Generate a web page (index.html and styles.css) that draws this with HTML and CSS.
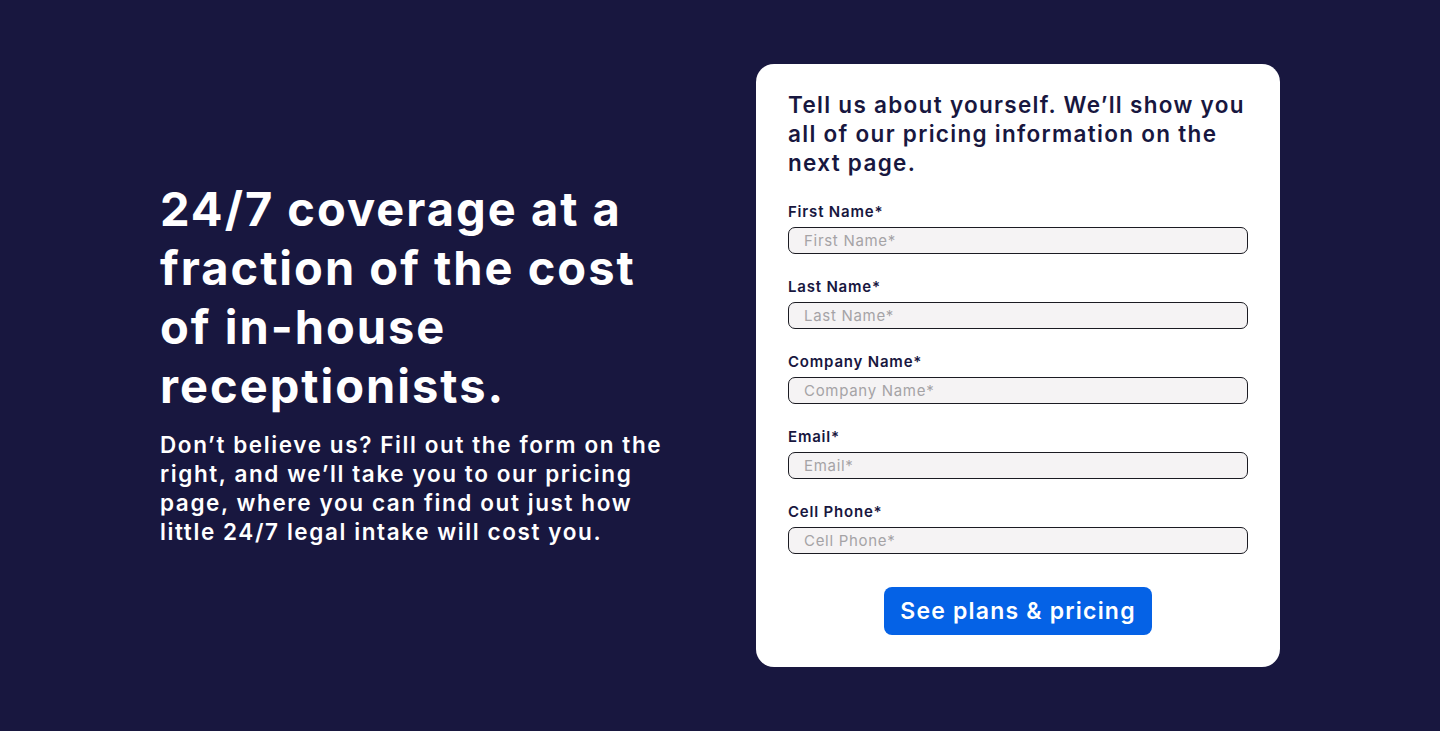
FILE: index.html
```html
<!DOCTYPE html>
<html lang="en">
<head>
<meta charset="utf-8">
<title>24/7 coverage</title>
<link rel="stylesheet" href="styles.css">
</head>
<body>
<section class="hero">
  <div class="hero-inner">
    <div class="intro">
      <h1 class="intro-title">24/7 coverage at a fraction of the cost of in-house receptionists.</h1>
      <p class="intro-text">Don’t believe us? Fill out the form on the right, and we’ll take you to our pricing page, where you can find out just how little 24/7 legal intake will cost you.</p>
    </div>
    <form class="card" onsubmit="return false">
      <h2 class="card-title">Tell us about yourself. We’ll show you all of our pricing information on the next page.</h2>
      <div class="fields">
        <label class="field">
          <span class="field-label">First Name*</span>
          <input class="field-input" type="text" placeholder="First Name*">
        </label>
        <label class="field">
          <span class="field-label">Last Name*</span>
          <input class="field-input" type="text" placeholder="Last Name*">
        </label>
        <label class="field">
          <span class="field-label">Company Name*</span>
          <input class="field-input" type="text" placeholder="Company Name*">
        </label>
        <label class="field">
          <span class="field-label">Email*</span>
          <input class="field-input" type="email" placeholder="Email*">
        </label>
        <label class="field">
          <span class="field-label">Cell Phone*</span>
          <input class="field-input" type="tel" placeholder="Cell Phone*">
        </label>
      </div>
      <div class="actions">
        <button class="btn" type="submit">See plans &amp; pricing</button>
      </div>
    </form>
  </div>
</section>
</body>
</html>
```
FILE: styles.css
```css
* { box-sizing: border-box; }

html, body {
  margin: 0;
  padding: 0;
  background: #ffffff;
}

body {
  font-family: Inter, "DejaVu Sans", sans-serif;
  color: #18173f;
}

.hero {
  background: #18173f;
  height: 731px;
  padding: 64px 0;
  box-shadow: 0 3px 6px rgba(0, 0, 0, 0.28);
}

.hero-inner {
  width: 1120px;
  margin: 0 auto;
  display: grid;
  grid-template-columns: 524px 524px;
  column-gap: 72px;
  align-items: center;
  height: 100%;
}

.intro {
  color: #ffffff;
  padding-bottom: 7px;
}

.intro-title {
  margin: 0 0 15px;
  font-size: 47px;
  line-height: 59px;
  font-weight: 700;
  letter-spacing: 2px;
}

.intro-text {
  margin: 0;
  font-size: 22.5px;
  line-height: 29px;
  font-weight: 600;
  letter-spacing: 1.6px;
}

.card {
  background: #ffffff;
  border-radius: 18px;
  padding: 26px 32px 32px;
  display: flex;
  flex-direction: column;
}

.card-title {
  margin: 0 0 25px;
  font-size: 22.5px;
  line-height: 29px;
  font-weight: 600;
  letter-spacing: 1.3px;
  color: #18173f;
}

.fields {
  display: flex;
  flex-direction: column;
  gap: 23px;
}

.field {
  display: flex;
  flex-direction: column;
  gap: 5px;
}

.field-label {
  font-size: 15px;
  line-height: 20px;
  font-weight: 600;
  letter-spacing: 0.8px;
  color: #18173f;
}

.field-input {
  display: block;
  width: 100%;
  height: 27px;
  margin: 0;
  padding: 0 15px;
  border: 1px solid #1b1b22;
  border-radius: 7px;
  background: #f5f3f4;
  font-family: Inter, "DejaVu Sans", sans-serif;
  font-size: 15px;
  font-weight: 400;
  letter-spacing: 0.7px;
  color: #18173f;
  outline: none;
}

.field-input::placeholder {
  color: #a5a3a6;
  opacity: 1;
}

.actions {
  margin-top: 33px;
  display: flex;
  justify-content: center;
}

.btn {
  height: 48px;
  padding: 0 16px;
  border: 0;
  border-radius: 8px;
  background: #0562e6;
  color: #ffffff;
  font-family: Inter, "DejaVu Sans", sans-serif;
  font-size: 23px;
  font-weight: 600;
  letter-spacing: 1.2px;
  cursor: pointer;
}
```
